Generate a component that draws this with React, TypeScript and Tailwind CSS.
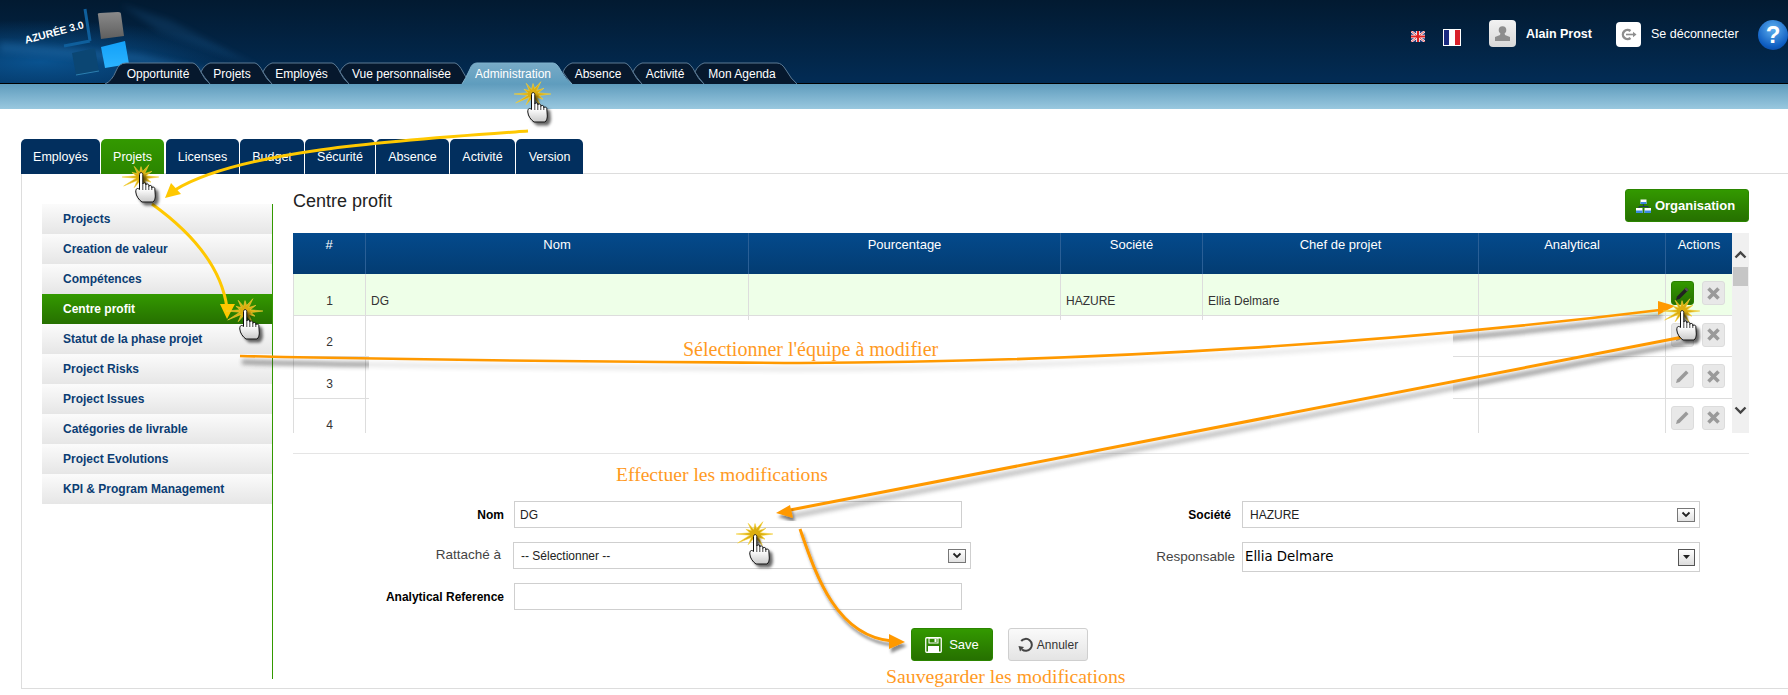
import React from "react";

const SANS = "font-['Liberation_Sans',Arial,sans-serif]";

const navTabs: { label: string; w: number; kind?: "first" | "active" | "last"; cls?: string }[] = [
  { label: "Opportunité", w: 96, kind: "first", cls: "pl-[10px]" },
  { label: "Projets", w: 62 },
  { label: "Employés", w: 77 },
  { label: "Vue personnalisée", w: 123 },
  { label: "Administration", w: 100, kind: "active" },
  { label: "Absence", w: 70 },
  { label: "Activité", w: 62, cls: "pl-[2px]" },
  { label: "Mon Agenda", w: 102, kind: "last", cls: "pr-[8px]" },
];

function navPath(w: number, kind?: string) {
  if (kind === "first") return `M0 21 Q7 18 11 8 Q14 0 21 0 L${w - 8} 0 Q${w - 4} 1 ${w} 9 Q${w + 3} 16 ${w + 9} 21`;
  if (kind === "active") return `M-1 21 Q3 15 7 6 Q9 0 14 0 L${w - 10} 0 Q${w - 6} 0 ${w - 2} 8 Q${w + 2} 16 ${w + 9} 21`;
  if (kind === "last") return `M9 21 Q3 14 0 9 Q3 2 9 0 L${w - 20} 0 Q${w - 15} 0 ${w - 11} 7 Q${w - 6} 16 ${w} 21`;
  return `M9 21 Q3 14 0 9 Q3 2 9 0 L${w - 8} 0 Q${w - 4} 1 ${w} 9 Q${w + 3} 16 ${w + 9} 21`;
}

function NavTab({ label, w, kind, cls }: { label: string; w: number; kind?: "first" | "active" | "last"; cls?: string }) {
  const active = kind === "active";
  return (
    <div style={{ width: w }} className={`relative h-[21px] flex items-center justify-center text-[12px] text-white ${active ? "z-10" : ""} ${cls ?? ""}`}>
      <svg className="absolute inset-0 overflow-visible" width={w} height={21}>
        <path d={navPath(w, kind)} fill={active ? "url(#navActive)" : "#06182d"} stroke={active ? "#7fb1cc" : "#5c7a94"} strokeWidth="1" />
      </svg>
      <span className="relative">{label}</span>
    </div>
  );
}

const mainTabs = [
  { label: "Employés", w: 79, gap: 1 },
  { label: "Projets", w: 63, gap: 2, active: true },
  { label: "Licenses", w: 73, gap: 1 },
  { label: "Budget", w: 64, gap: 1 },
  { label: "Sécurité", w: 70, gap: 1 },
  { label: "Absence", w: 73, gap: 1 },
  { label: "Activité", w: 65, gap: 1 },
  { label: "Version", w: 67, gap: 0 },
];

const sideItems = [
  "Projects",
  "Creation de valeur",
  "Compétences",
  "Centre profit",
  "Statut de la phase projet",
  "Project Risks",
  "Project Issues",
  "Catégories de livrable",
  "Project Evolutions",
  "KPI & Program Management",
];

const headers = ["#", "Nom", "Pourcentage", "Société", "Chef de projet", "Analytical", "Actions"];
const COLS = "grid grid-cols-[73px_383px_312px_142px_276px_187px_66px]";

function Pencil({ dark }: { dark?: boolean }) {
  return (
    <svg width="15" height="15" viewBox="0 0 15 15">
      <path d="M11 1.5 L13.5 4 L4.5 13 L1 14 L2 10.5 Z" fill={dark ? "#222" : "#9a9a9a"} />
      {dark && <path d="M11 1.5 L13.5 4 L12 5.5 L9.5 3 Z" fill="#555" />}
    </svg>
  );
}

function XIcon() {
  return (
    <svg width="13" height="13" viewBox="0 0 13 13">
      <path d="M1.5 1.5 L11.5 11.5 M11.5 1.5 L1.5 11.5" stroke="#9a9a9a" strokeWidth="3.6" />
    </svg>
  );
}

function Actions({ active }: { active?: boolean }) {
  return (
    <div className="flex gap-2 pl-[5px] pt-[7px]">
      <div className={`w-[23px] h-[24px] rounded-[3px] border flex items-center justify-center ${active ? "bg-linear-to-b from-[#339900] to-[#267000] border-[#2b8000]" : "bg-[#e8e8e8] border-[#dcdcdc]"}`}>
        <Pencil dark={active} />
      </div>
      <div className="w-[23px] h-[24px] rounded-[3px] border border-[#dcdcdc] bg-[#e8e8e8] flex items-center justify-center">
        <XIcon />
      </div>
    </div>
  );
}

function Row({ n, active, dg }: { n: number; active?: boolean; dg?: boolean }) {
  const cell = "border-r border-[#dddddd] flex items-end pb-[5px] text-[12px] text-[#333]";
  return (
    <div className={`${COLS} h-[41.5px] border-b border-[#dddddd] ${active ? "bg-[#eeffe8]" : "bg-white"}`}>
      <div className={`${cell} border-l justify-center`}>{n}</div>
      <div className={`${cell} pl-[5px]`}>{dg ? "DG" : ""}</div>
      <div className={cell} />
      <div className={`${cell} pl-[5px]`}>{dg ? "HAZURE" : ""}</div>
      <div className={`${cell} pl-[5px]`}>{dg ? "Ellia Delmare" : ""}</div>
      <div className={cell} />
      <div>
        <Actions active={active} />
      </div>
    </div>
  );
}

function SelectArrow({ dark }: { dark?: boolean }) {
  if (dark)
    return (
      <div className="w-[17px] h-[17px] border border-[#555] bg-linear-to-b from-white to-[#dcdcdc] flex items-center justify-center">
        <svg width="9" height="6" viewBox="0 0 9 6"><path d="M1 1 H8 L4.5 5 Z" fill="#222" /></svg>
      </div>
    );
  return (
    <div className="w-[18px] h-[14px] border border-[#777] bg-linear-to-b from-white to-[#e2e2e2] flex items-center justify-center">
      <svg width="10" height="7" viewBox="0 0 10 7"><path d="M1.5 1.5 L5 5 L8.5 1.5" stroke="#222" strokeWidth="1.8" fill="none" /></svg>
    </div>
  );
}

function Field({ label, bold, w = 448, children, h = 27, gap = 10 }: { label: string; bold?: boolean; w?: number; children?: React.ReactNode; h?: number; gap?: number }) {
  return (
    <div className="flex items-center" style={{ height: h }}>
      <div style={{ marginRight: gap }} className={`flex-1 text-right ${bold ? "font-bold text-[12px] text-black" : "text-[13.5px] text-[#444]"}`}>{label}</div>
      <div style={{ width: w, height: h }} className="border border-[#cfcfcf] bg-white flex items-center justify-between text-[12px] text-[#222] shrink-0">
        {children}
      </div>
    </div>
  );
}

function Hand({ x, y }: { x: number; y: number }) {
  return (
    <g transform={`translate(${x} ${y})`}>
      <path
        filter="url(#handShadow)"
        d="M4.5 2.5 C4.5 0 7.8 0 7.8 2.5 L7.8 12 C7.8 10.5 10.8 10.5 10.8 12 L10.8 13 C10.8 11.5 13.8 11.5 13.8 13.5 L13.8 14.5 C13.8 13 16.8 13 16.8 15 L16.8 16 C16.8 14.8 19.8 14.8 19.8 16.5 L20.3 24 C20.3 27 19.3 29 18 30 L7 30 C4 28 1 24 0.8 20 C0.6 16.5 2.5 15.5 4.5 17.5 Z"
        fill="url(#handFill)"
        stroke="#111"
        strokeWidth="1"
      />
      <path d="M7.8 12 V18 M10.8 13 V18 M13.8 14.5 V18 M16.8 16 V18" stroke="#111" strokeWidth="0.8" />
    </g>
  );
}

const starR = [17, 6, 11, 5, 14, 5, 10, 5, 13, 5, 19, 5, 18, 5, 10, 5, 13, 5, 11, 6, 15, 5, 12, 5];
function Star({ x, y }: { x: number; y: number }) {
  const pts = starR
    .map((r, i) => {
      const a = (i / starR.length) * Math.PI * 2;
      return `${(x + Math.cos(a) * r * 1.05).toFixed(1)},${(y + Math.sin(a) * r * 0.95).toFixed(1)}`;
    })
    .join(" ");
  return <polygon points={pts} fill="#dcae10" stroke="#f5d23a" strokeWidth="0.6" />;
}

const C = "M240 356 C500 362 700 362 800 363 C1100 362 1400 342 1660 310";
const D = "M1683 337 L785 511";

function Annotations() {
  return (
    <svg className="absolute inset-0 z-20 pointer-events-none" width="1788" height="695">
      <defs>
        <filter id="blur3" x="-5%" y="-50%" width="110%" height="200%"><feGaussianBlur stdDeviation="2" /></filter>
        <filter id="arrowShadow" x="-20%" y="-20%" width="140%" height="140%"><feDropShadow dx="2" dy="4" stdDeviation="1.6" floodColor="#000" floodOpacity="0.45" /></filter>
        <filter id="handShadow" x="-40%" y="-40%" width="200%" height="180%"><feDropShadow dx="3" dy="3" stdDeviation="1.6" floodColor="#000" floodOpacity="0.6" /></filter>
        <linearGradient id="handFill" x1="0" y1="0" x2="0" y2="1">
          <stop offset="0.55" stopColor="#ffffff" />
          <stop offset="1" stopColor="#c9c9c9" />
        </linearGradient>
        <clipPath id="outer"><rect x="0" y="0" width="369" height="695" /><rect x="1453" y="0" width="335" height="695" /></clipPath>
        <clipPath id="inner"><rect x="369" y="0" width="1084" height="695" /></clipPath>
      </defs>

      {[C, D].map((d, i) => (
        <g key={i}>
          <g clipPath="url(#outer)">
            <path d={d} transform="translate(2 6)" stroke="#333" strokeWidth="5" opacity="0.45" fill="none" filter="url(#blur3)" />
          </g>
          <g clipPath="url(#inner)">
            <path d={d} transform="translate(2 6)" stroke="#333" strokeWidth="5" opacity={i === 0 ? 0.1 : 0.3} fill="none" filter="url(#blur3)" />
          </g>
        </g>
      ))}
      <path d={C} stroke="#ff9900" strokeWidth="2.6" fill="none" />
      <path d={D} stroke="#ff9900" strokeWidth="3" fill="none" />
      <polygon points="1675,306 1658,301 1658,315" fill="#ff9900" />
      <polygon points="776,513 790,505 793,518" fill="#ff9900" filter="url(#arrowShadow)" />

      <g filter="url(#arrowShadow)">
        <path d="M800 529 C815 572 835 636 892 641" stroke="#ff9900" strokeWidth="3" fill="none" />
        <polygon points="905,642 889,634 889,649" fill="#ff9900" />
      </g>
      <g>
        <path d="M528 131 C400 140 240 150 175 190" stroke="#ffc800" strokeWidth="3" fill="none" />
        <polygon points="165,198 171,183 181,194" fill="#ffc800" />
        <path d="M152 204 C195 235 222 270 227 308" stroke="#ffc800" strokeWidth="3" fill="none" />
        <polygon points="227,319 220,304 235,304" fill="#ffc800" />
      </g>

      <Star x={533} y={94} /><Hand x={527} y={92} />
      <Star x={141} y={177} /><Hand x={135} y={172} />
      <Star x={245} y={311} /><Hand x={239} y={309} />
      <Star x={1682} y={311} /><Hand x={1676} y={310} />
      <Star x={755} y={534} /><Hand x={749} y={534} />
    </svg>
  );
}

function Logo() {
  return (
    <div className="absolute left-0 top-0 w-[330px] h-[83px]">
      <svg className="absolute inset-0" width="330" height="83">
        <defs>
          <radialGradient id="glow" cx="0.5" cy="0.5" r="0.5">
            <stop offset="0" stopColor="#0b5a9c" stopOpacity="0.85" />
            <stop offset="1" stopColor="#0b5a9c" stopOpacity="0" />
          </radialGradient>
          <linearGradient id="gray" x1="0" y1="0" x2="0" y2="1">
            <stop offset="0" stopColor="#8a8a8a" />
            <stop offset="1" stopColor="#5e5e5e" />
          </linearGradient>
          <linearGradient id="sky" x1="0" y1="0" x2="0" y2="1">
            <stop offset="0" stopColor="#12a0f8" />
            <stop offset="1" stopColor="#2cb4ff" />
          </linearGradient>
          <linearGradient id="navActive" x1="0" y1="0" x2="0" y2="1">
            <stop offset="0" stopColor="#78abc7" />
            <stop offset="1" stopColor="#5f9dbe" />
          </linearGradient>
          <filter id="soft"><feGaussianBlur stdDeviation="3" /></filter>
        </defs>
        <ellipse cx="40" cy="62" rx="200" ry="42" fill="url(#glow)" />
        <polygon points="0,42 140,54 260,82 130,62 0,52" fill="#2a78b8" opacity="0.35" filter="url(#soft)" />
        <polygon points="120,4 170,20 265,70 160,32" fill="#2a78b8" opacity="0.18" filter="url(#soft)" />
        <path d="M98 15 Q97 13 100 13 L118 12 Q121 12 121 14 L124 36 L101 39 Z" fill="url(#gray)" />
        <polygon points="101,47 125,41 129,64 105,68" fill="url(#sky)" />
        <polygon points="72,53 95,48 99,71 76,75" fill="#0b4673" />
        <path d="M76 75 L99 71" stroke="#2c7fb0" strokeWidth="1" />
        <path d="M85 9 L90 41 M64 46 L90 41" stroke="#0f5f9c" strokeWidth="3" />
      </svg>
      <span className="absolute left-[24px] top-[25px] -rotate-[15deg] text-[10.5px] font-bold text-white whitespace-nowrap">AZURÉE 3.0</span>
    </div>
  );
}

function UserBlock() {
  return (
    <div className="flex items-start pt-[20px]">
      <svg width="14" height="11" viewBox="0 0 14 11" className="mt-[11px]">
        <rect width="14" height="11" fill="#2a3a7c" />
        <path d="M0 0 L14 11 M14 0 L0 11" stroke="#fff" strokeWidth="2.2" />
        <path d="M7 0 V11 M0 5.5 H14" stroke="#fff" strokeWidth="3.6" />
        <path d="M0 0 L14 11 M14 0 L0 11" stroke="#d22" strokeWidth="0.8" />
        <path d="M7 0 V11 M0 5.5 H14" stroke="#d22" strokeWidth="2" />
      </svg>
      <div className="ml-[18px] mt-[9px] w-[18px] h-[17px] border border-white flex">
        <div className="w-1/3 bg-[#1a2a80]" />
        <div className="w-1/3 bg-white" />
        <div className="w-1/3 bg-[#d8202a]" />
      </div>
      <div className="ml-[28px] w-[27px] h-[27px] rounded-[4px] bg-linear-to-b from-[#f2f2f2] to-[#d8d8d8] flex items-center justify-center">
        <svg width="17" height="15" viewBox="0 0 17 15">
          <circle cx="8.5" cy="4" r="3.8" fill="#8e8e8e" />
          <path d="M6.5 7 H10.5 L11 9 L16 11 V15 H1 V11 L6 9 Z" fill="#8e8e8e" />
        </svg>
      </div>
      <span className="ml-[10px] mt-[5px] text-[12.5px] font-bold text-white w-[67px] whitespace-nowrap">Alain Prost</span>
      <div className="ml-[23px] mt-[2px] w-[25px] h-[25px] rounded-[4px] bg-white flex items-center justify-center">
        <svg width="17" height="13" viewBox="0 0 17 13">
          <path d="M10.5 3 A4.6 4.6 0 1 0 10.5 10" stroke="#8e8e8e" strokeWidth="2.4" fill="none" />
          <path d="M6 6.5 H14" stroke="#8e8e8e" strokeWidth="1.6" />
          <path d="M13 3.8 L16.5 6.5 L13 9.2 Z" fill="#8e8e8e" />
        </svg>
      </div>
      <span className="ml-[10px] mt-[5px] text-[12.5px] text-white w-[89px] whitespace-nowrap">Se déconnecter</span>
      <div className="ml-[18px] w-[30px] h-[30px] rounded-full bg-[radial-gradient(circle_at_50%_30%,#5fb0f0,#0d5cc0_70%,#0a3f90)] flex items-center justify-center text-[24px] font-bold text-white leading-none">?</div>
    </div>
  );
}

export default function App() {
  return (
    <div className={`relative w-[1788px] h-[695px] overflow-hidden bg-white ${SANS}`}>
      {/* Header */}
      <header className="relative h-[84px] bg-linear-to-b from-[#021a31] to-[#022c55] border-b border-black">
        <Logo />
        <div className="relative h-[63px] flex justify-end">
          <UserBlock />
        </div>
        <nav className="relative flex pl-[105px] h-[20px]">
          {navTabs.map((t) => (
            <NavTab key={t.label} {...t} />
          ))}
        </nav>
      </header>
      <div className="h-[25px] bg-linear-to-b from-[#5f9cbd] to-[#99c8df]" />

      {/* Main tabs */}
      <div className="relative z-10 flex pl-[21px] mt-[30px] -mb-px">
        {mainTabs.map((t) => (
          <div
            key={t.label}
            style={{ width: t.w, marginRight: t.gap }}
            className={`h-[35px] pt-[1px] rounded-t-[5px] flex items-center justify-center text-[12.5px] text-white ${t.active ? "bg-linear-to-b from-[#339900] to-[#2b8500]" : "bg-[#022f5e]"}`}
          >
            {t.label}
          </div>
        ))}
      </div>

      {/* Content box */}
      <div className="ml-[21px] h-[516px] border-l border-t border-b border-[#dddddd] flex">
        <aside className="ml-[20px] mt-[30px] w-[231px] h-[475px] border-r border-[#339900]">
          {sideItems.map((s) => {
            const active = s === "Centre profit";
            return (
              <div
                key={s}
                className={`h-[30px] pl-[21px] flex items-center text-[12px] font-bold ${active ? "bg-linear-to-b from-[#339900] to-[#267000] text-white" : "bg-linear-to-b from-[#fbfbfb] to-[#e6e6e6] text-[#0b3d73]"}`}
              >
                {s}
              </div>
            );
          })}
        </aside>

        <main className="ml-[20px] w-[1456px] pt-[15px]">
          <div className="flex justify-between h-[33px] mb-[11px]">
            <h1 className="text-[18px] leading-[24px] text-[#222]">Centre profit</h1>
            <button className="w-[124px] h-[33px] pr-[3px] rounded-[3px] border border-[#2b8500] bg-linear-to-b from-[#339900] to-[#267000] flex items-center justify-center gap-[4px] text-[13px] font-bold text-white">
              <svg width="15" height="14" viewBox="0 0 15 14">
                <rect x="4.5" y="0.5" width="6" height="4.5" fill="#fff" />
                <rect x="4.5" y="3" width="6" height="2" fill="#3a8ae0" />
                <path d="M7.5 5 V8 M3 9 V7.5 H12 V9" stroke="#1c3a5c" fill="none" />
                <rect x="0" y="9" width="6.5" height="5" fill="#fff" />
                <rect x="0" y="11.5" width="6.5" height="2.5" fill="#3a8ae0" />
                <rect x="8.5" y="9" width="6.5" height="5" fill="#fff" />
                <rect x="8.5" y="11.5" width="6.5" height="2.5" fill="#3a8ae0" />
              </svg>
              Organisation
            </button>
          </div>

          {/* Table */}
          <div className="relative flex h-[200px]">
            <div className="w-[1439px] overflow-hidden">
              <div className={`${COLS} h-[41px] bg-linear-to-b from-[#044a8c] to-[#033c72]`}>
                {headers.map((h, i) => (
                  <div key={h} className={`pt-[2px] text-center text-[13px] text-white ${i < 6 ? "border-r border-[#2a5f96]" : ""}`}>
                    {h}
                  </div>
                ))}
              </div>
              <Row n={1} active dg />
              <Row n={2} />
              <Row n={3} />
              <Row n={4} />
            </div>
            <div className="relative w-[17px] bg-[#f0f0f0] flex flex-col items-center">
              <svg width="13" height="9" viewBox="0 0 13 9" className="mt-[17px]"><path d="M1.5 7.5 L6.5 2.5 L11.5 7.5" stroke="#444" strokeWidth="2.4" fill="none" /></svg>
              <div className="w-[15px] h-[19px] mt-[8px] bg-[#c6c6c6]" />
              <svg width="13" height="9" viewBox="0 0 13 9" className="mt-[120px]"><path d="M1.5 1.5 L6.5 6.5 L11.5 1.5" stroke="#444" strokeWidth="2.4" fill="none" /></svg>
            </div>
            {/* White patch laid over the rows by the annotator */}
            <div className="absolute left-[76px] top-[87px] w-[1084px] h-[113px] bg-white" />
          </div>

          {/* Form */}
          <div className="mt-[20px] border-t border-[#e5e5e5] pt-[47px]">
            <div className="flex">
              <div className="w-[678px] flex flex-col gap-[14px]">
                <div className="pr-[9px]">
                  <Field label="Nom" bold><span className="pl-[5px]">DG</span></Field>
                </div>
                <Field label="Rattaché à" w={458} gap={12}>
                  <span className="pl-[7px]">-- Sélectionner --</span>
                  <span className="pr-[4px]"><SelectArrow /></span>
                </Field>
                <div className="pr-[9px]">
                  <Field label="Analytical Reference" bold />
                </div>
              </div>
              <div className="w-[729px] flex flex-col gap-[14px]">
                <Field label="Société" bold w={458} gap={11}>
                  <span className="pl-[7px]">HAZURE</span>
                  <span className="pr-[4px]"><SelectArrow /></span>
                </Field>
                <Field label="Responsable" w={458} h={30} gap={7}>
                  <span className="pl-[2px] font-['DejaVu_Sans',sans-serif] text-[13.3px] text-black">Ellia Delmare</span>
                  <span className="pr-[4px]"><SelectArrow dark /></span>
                </Field>
              </div>
            </div>
            <div className="flex mt-[18px] pl-[618px] gap-[15px]">
              <button className="w-[82px] h-[33px] rounded-[3px] border border-[#2b8500] bg-linear-to-b from-[#339900] to-[#267000] flex items-center justify-center gap-[7px] text-[13px] text-white">
                <svg width="17" height="16" viewBox="0 0 17 16">
                  <rect x="0.75" y="0.75" width="15.5" height="14.5" rx="1" fill="none" stroke="#fff" strokeWidth="1.3" />
                  <rect x="4" y="1" width="9" height="5" fill="none" stroke="#fff" />
                  <rect x="9.5" y="2" width="2" height="3" fill="#fff" />
                  <rect x="3" y="9" width="11" height="6" fill="#fff" />
                </svg>
                Save
              </button>
              <button className="w-[80px] h-[33px] rounded-[3px] border border-[#cfcfcf] bg-linear-to-b from-[#fafafa] to-[#e4e4e4] flex items-center justify-center gap-[4px] text-[12px] text-[#333]">
                <svg width="15" height="15" viewBox="0 0 15 15">
                  <path d="M3.2 4 A6 6 0 1 1 4 12.5" stroke="#444" strokeWidth="2" fill="none" />
                  <path d="M0.5 9 L6 10 L2 14.5 Z" fill="#444" />
                </svg>
                Annuler
              </button>
            </div>
          </div>
        </main>
      </div>

      <Annotations />
      <span className="absolute z-20 left-[683px] top-[338px] text-[20px] leading-[22px] text-[#ff9a1f] font-['Liberation_Serif',serif] whitespace-nowrap">Sélectionner l'équipe à modifier</span>
      <span className="absolute z-20 left-[616px] top-[464px] text-[19.6px] leading-[22px] text-[#ff9a1f] font-['Liberation_Serif',serif] whitespace-nowrap">Effectuer les modifications</span>
      <span className="absolute z-20 left-[886px] top-[665px] text-[19.8px] leading-[22px] text-[#ff9a1f] font-['Liberation_Serif',serif] whitespace-nowrap">Sauvegarder les modifications</span>
    </div>
  );
}
